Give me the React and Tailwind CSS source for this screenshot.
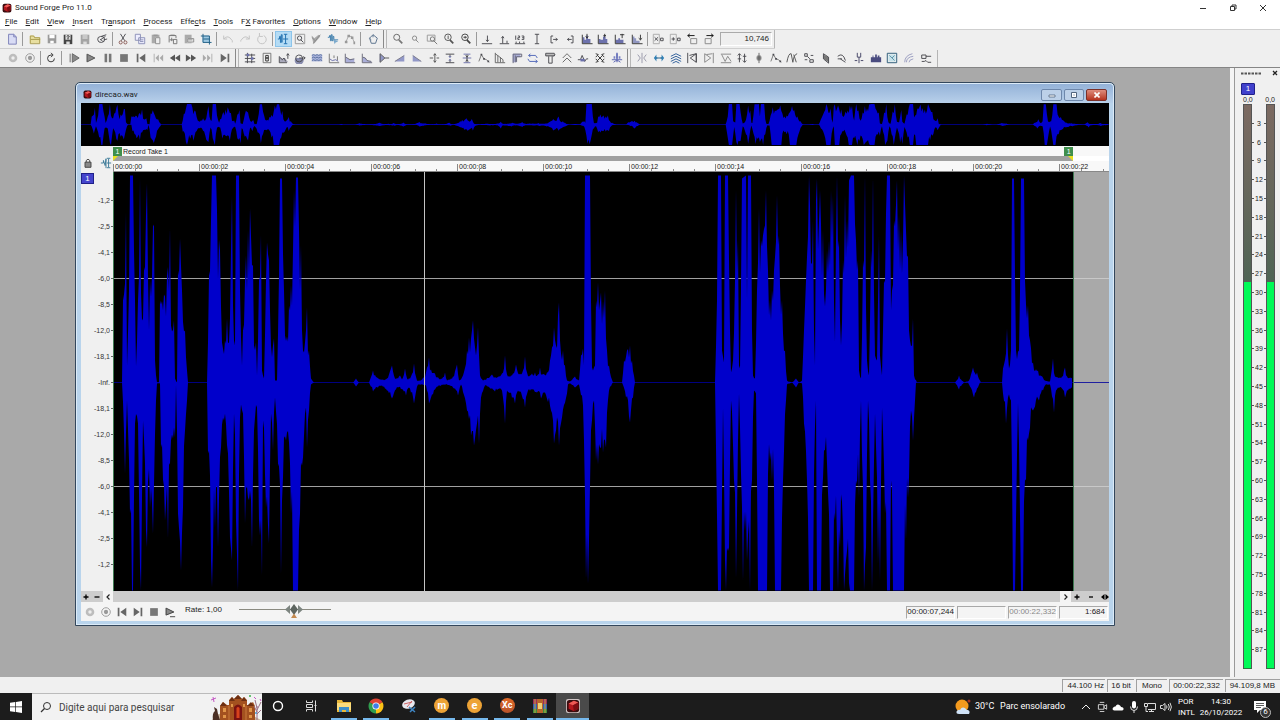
import React from "react";

/* ---------- audio envelope: [x, y] pairs inside a 996 x 419 lane, origin 113,172 ---------- */
const UPPER =
  "113,382 122,382 123,300 126,212 127,366 129,290 130,175 133,175 135,300 136,366 138,300 140,178 142,320 144,270 147,183 149,330 150,280 153,224 154,226 155,360 157,382 160,382 160,300 164,294 167,275 170,228 171,325 174,320 175,378 177,382 178,270 180,238 182,290 185,330 187,370 188,382 207,382 209,275 211,220 212,175 216,175 217,210 220,250 222,342 225,340 227,318 229,342 231,250 232,195 234,340 235,345 236,175 239,175 240,290 242,365 243,330 246,255 247,290 248,230 250,208 253,265 254,345 256,342 257,375 259,280 261,235 262,370 264,378 266,280 267,242 269,260 271,345 273,345 274,338 275,380 277,380 279,275 280,178 282,178 284,290 285,335 287,336 289,305 291,285 293,250 294,190 296,177 298,177 299,230 301,245 302,330 304,352 306,330 307,307 308,355 309,350 311,378 314,382 353,382 356,378 359,382 369,382 373,370 377,377 380,379 387,378 392,365 395,378 400,375 402,379 405,368 407,378 411,376 414,363 417,380 422,379 426,372 429,357 431,369 435,373 440,379 445,372 447,380 453,376 457,364 459,380 463,375 467,350 469,337 472,330 473,320 476,355 478,327 480,375 483,380 492,374 497,377 502,373 505,355 507,374 513,373 516,364 519,374 523,370 525,356 527,372 532,373 535,372 538,374 540,367 542,374 547,372 551,355 554,327 556,345 558,315 559,302 560,340 563,350 565,365 567,380 570,381 575,376 579,380 581,355 583,348 584,365 585,175 590,175 591,300 592,367 595,365 596,300 598,282 599,310 601,292 605,290 607,350 610,372 613,382 622,382 624,360 627,350 630,345 632,360 635,382 715,382 717,300 718,175 721,175 722,350 724,362 725,175 728,175 730,330 731,372 733,360 735,280 736,190 738,240 739,365 740,368 742,178 746,175 747,300 748,175 751,175 752,330 753,375 755,378 757,290 759,208 761,240 763,235 766,190 768,270 770,300 772,290 774,270 777,195 779,235 782,300 785,350 787,380 792,382 796,378 799,382 802,380 804,330 806,280 809,175 810,205 813,220 814,330 815,365 816,200 817,178 820,190 823,230 825,306 827,250 829,240 831,190 833,195 835,342 836,240 837,175 839,240 841,345 843,260 845,195 847,220 849,180 851,175 854,175 856,240 858,260 859,370 861,378 863,260 865,175 867,360 869,375 871,250 873,177 875,355 877,360 879,235 880,355 882,375 884,280 887,175 890,175 891,310 892,290 894,220 897,180 899,215 901,230 904,175 906,230 908,255 909,330 912,345 913,318 914,375 917,382 955,382 959,375 964,382 969,380 973,367 977,372 981,382 1002,382 1003,368 1007,328 1009,368 1011,350 1012,178 1014,178 1016,350 1019,350 1021,178 1024,178 1025,280 1028,305 1030,340 1033,362 1038,370 1045,380 1050,381 1053,358 1055,376 1062,376 1065,367 1067,376 1073,376";
const LOWER =
  "113,382 122,382 125,473 127,400 130,513 132,590 133,590 135,423 138,423 140,567 141,590 143,420 146,530 147,547 150,507 153,533 156,400 157,383 160,383 161,447 165,520 168,538 171,440 175,437 176,384 178,513 181,570 183,507 187,400 188,382 207,382 208,453 211,560 212,587 215,527 218,547 221,447 224,420 228,453 230,537 232,560 234,413 236,520 238,590 240,417 243,413 245,523 248,497 252,547 254,430 257,407 259,520 262,575 263,420 266,507 269,543 271,413 273,450 275,397 278,463 281,573 283,477 286,440 290,463 291,513 293,590 298,590 300,513 303,457 306,407 307,447 309,410 311,384 314,382 353,382 356,386 359,382 369,382 373,391 382,385 392,398 398,387 406,395 409,387 414,403 418,384 426,385 429,403 438,386 447,384 453,387 458,395 461,384 467,410 471,435 474,445 477,423 479,443 481,397 485,385 495,391 502,390 505,423 507,390 515,403 518,390 525,407 528,390 537,392 541,398 544,392 551,410 554,443 556,430 559,445 562,417 567,393 568,384 570,383 575,387 579,384 583,405 585,497 586,578 588,583 589,540 591,430 594,400 596,460 598,464 600,447 603,452 606,447 609,390 613,382 622,382 626,397 630,422 633,397 635,382 715,382 716,447 718,590 721,590 723,407 725,560 726,590 729,547 731,400 734,480 736,577 739,393 741,473 743,580 745,530 747,560 750,590 752,480 754,390 756,393 758,590 767,590 768,473 772,480 774,487 775,590 781,590 783,480 786,400 787,384 792,382 796,387 799,382 802,383 804,423 807,480 809,590 813,590 814,473 816,400 817,590 821,590 824,450 827,463 830,590 833,590 835,520 838,590 840,547 844,590 846,560 850,590 854,590 856,480 859,497 861,400 864,590 866,547 868,400 870,480 872,590 875,413 878,563 880,580 882,407 885,513 887,590 890,590 891,480 893,590 904,590 906,540 909,477 911,410 913,440 915,400 916,382 955,382 959,389 964,382 968,382 974,397 980,382 1002,382 1003,393 1006,423 1008,397 1011,400 1013,590 1015,590 1018,402 1021,590 1023,590 1026,480 1029,433 1033,410 1039,400 1043,390 1045,385 1050,384 1054,412 1056,390 1062,388 1065,397 1068,390 1073,388";

/* Resamples an envelope to one column per pixel; columns between two listed peaks vary a little. */
function columns(text, seed) {
  const pts = text.split(" ").map((p) => p.split(",").map(Number));
  const out = [];
  let k = 0;
  for (let x = 113; x < 1073; x++) {
    while (k < pts.length - 2 && pts[k + 1][0] <= x) k++;
    const [x0, y0] = pts[k];
    const [x1, y1] = pts[k + 1];
    const t = x1 === x0 ? 0 : (x - x0) / (x1 - x0);
    const amp = y0 + (y1 - y0) * t - 382;
    const noise = Math.abs(Math.sin((x + seed) * 127.1) * 43758.5) % 1;
    const flat = Math.abs(amp) > 200 || x === x0;
    out.push([x, 382.5 + amp * (flat ? 1 : 0.62 + 0.38 * noise)]);
  }
  return out;
}
const WAVE = columns(UPPER, 3)
  .concat(columns(LOWER, 11).reverse())
  .map(([x, y]) => x + "," + y.toFixed(1))
  .join(" ");

/* ---------- toolbar glyphs on a 14 x 14 grid: [kind, colour, path] ---------- */
const K = "#4a4a50";
const G = "#8d8d8d";
const L = "#c2c2c2";
const B = "#6c71ac";
const C = "#2f7fb5";
const GLYPHS = {
  new: [["f", "#d9dcf5", "M3 1h6l3 3v9H3z"], ["s", "#7d82b8", "M3 1.500h6l3 3v8.500H3zM9 1.500v3h3"]],
  open: [["f", "#e8dfa0", "M1 3h5l1 2h6v7H1z"], ["s", "#a89a4c", "M1.500 3.500h4l1 2h6v7h-11zM2 7.500h11"]],
  save: [["f", "#9a9a9a", "M2 2h10v10H2z"], ["f", "#fff", "M4 2h6v4H4zM5 9h4v3H5z"]],
  saveAs: [["f", "#444", "M2 2h10v11H2z"], ["f", "#ddd", "M4 2h6v6H4zM5 10h4v3H5z"], ["s", "#222", "M5.500 4q1.500-2 3 0l-1.500 1.500v2"]],
  saveAll: [["f", "#a5a5a5", "M2 2h10v11H2z"], ["f", "#c9c9c9", "M4 2h6v5H4z"], ["f", "#dedede", "M5 10h4v3H5z"]],
  render: [["s", K, "M2 8a4 3.500 0 1 0 8-1a4 3.500 0 1 0-8 1M6 4l6-2M5 8l6-4M5 7l3 3M9 8l4-1"]],
  cut: [["s", K, "M4 1l5 8M10 1L5 9"], ["s", "#8a5a55", "M2.500 11a1.800 1.800 0 1 0 3.600 0a1.800 1.800 0 1 0-3.600 0M8 11a1.800 1.800 0 1 0 3.600 0a1.800 1.800 0 1 0-3.600 0"]],
  copy: [["f", "#eef", "M1 1h7v7H1zM5 5h8v8H5z"], ["s", "#8a8fb5", "M1.500 1.500h6v7h-6zM5.500 5.500h7v7h-7zM7 8h4M7 10h4"]],
  paste: [["f", "#aaa", "M2 2h9v10H2z"], ["f", "#eee", "M6 5h6v8H6z"], ["s", G, "M4 2.500h5M6.500 5.500h5v7h-5z"]],
  pasteMix: [["s", "#777", "M2.500 11V3h8v3M4 2.500h5M7.500 7.500h4v5h-4zM3 8h5M5.500 5.500v4"]],
  pasteNew: [["f", "#aaa", "M2 2h8v10H2z"], ["f", "#eee", "M5 6h8v5H5z"], ["s", G, "M5.500 6.500h7v4h-7zM6 8h5"]],
  crop: [["f", "#9cc8e2", "M3 3h8v8H3z"], ["s", "#1e5f85", "M3.500 1v10h10M1 3.500h10v10M4 7h7"]],
  undo: [["s", L, "M2 7q5-6 10 2v2M2 3v4h4"]],
  redo: [["s", L, "M12 7Q7 1 2 9v1M12 3v4H8"]],
  repeat: [["s", L, "M4 3.500a5 5 0 1 0 5-.5M4 0v4h4"]],
  edit: [["s", "#1f6fae", "M1 7h2V4h1v7h1V2h1v9M8 1.500h4M10 1.500v11M8 12.500h4M7 7h6"]],
  zoomSel: [["s", "#999", "M1.500 1.500h11v11h-11z"], ["s", K, "M4 6a2.500 2.500 0 1 0 5 0a2.500 2.500 0 1 0-5 0M8 8l3 3"]],
  pencil: [["f", "#aaa", "M2 3l3 3 5-4 2 2-6 7-2 2z"], ["s", "#888", "M2 5l4 4M12 2l-8 10"]],
  event: [["s", "#3b7cab", "M1 5h2V3h1v6h1V2h1v7h1V4h1v4h5"], ["f", "#7aa9cc", "M7 7l6 3-3 1-1 2z"]],
  env: [["s", "#aaa", "M2 11l3-7h4l3 7"], ["f", "#999", "M1 9h3v3H1zM4 2h3v3H4zM8 4h3v3H8zM11 10h2v3h-2z"]],
  script: [["s", "#58718c", "M3 6l4-4 5 4-2 6H5zM7 2v3M3 6l2 2"]],
  zoom: [["s", "#666", "M2 5a3.500 3.500 0 1 0 7 0a3.500 3.500 0 1 0-7 0"], ["t", "#777", "M8 8l4 4"]],
  zoomSmall: [["s", "#888", "M4 6a2.500 2.500 0 1 0 5 0a2.500 2.500 0 1 0-5 0M8 8l3 3"]],
  zoomRect: [["s", "#9a9a9a", "M1.500 2.500h9v7h-9z"], ["s", "#777", "M5 7a2.500 2.500 0 1 0 5 0a2.500 2.500 0 1 0-5 0M9 9l4 4"]],
  zoomOne: [["s", "#555", "M2 5a3.800 3.800 0 1 0 7.600 0a3.800 3.800 0 1 0-7.600 0M6 3v4"], ["t", "#555", "M8 8l4 4"]],
  zoomAll: [["s", "#444", "M2 5a3.800 3.800 0 1 0 7.600 0a3.800 3.800 0 1 0-7.600 0M4 5h4M6 3.500v3"], ["t", "#444", "M8 8l4 4"]],
  toStart: [["s", K, "M1 12.500h12M7.500 3v7M6 8l1.500 2L9 8"]],
  toEnd: [["s", K, "M2 12.500h11M5.500 12V4M4 6l1.500-2L7 6M10.500 9v3"]],
  ruler: [["s", K, "M1 12.500h12M2.500 10v2M6.500 10v2M11.500 10v2M2 3v5M4.500 3.500h2v2h-2v2h2M9 3.500h2.500v4H9M9.500 5.500h2"]],
  ibeam: [["s", K, "M4.500 1.500h5M7 1.500v11M4.500 12.500h5"]],
  markIn: [["s", K, "M6 3.500H3.500v8H6M6 7.500h5M9 6l2 1.500L9 9"]],
  markOut: [["s", K, "M8 3.500h2.500v8H8M4 7.500h5M6 6L4 7.500 6 9"]],
  hist1: [["f", B, "M2 12V5h2v3h2V3h2v4h3v5z"], ["s", "#333", "M1.500 2v10.500h12M7 1v5M5.500 4L7 6l1.500-2"]],
  hist2: [["f", B, "M2 12V7h2v1h3V4h3v3h2v5z"], ["s", "#333", "M1.500 2v10.500h12M9 1v4M7.500 3h3"]],
  hist3: [["f", B, "M2 12V8h3V6h2v2h4v4z"], ["s", "#333", "M1.500 2v10.500h12M7 2h5M9.500 1v5"]],
  hist4: [["f", "#8f95bf", "M2 12V4h2v2h2v3h4v3z"], ["s", "#333", "M1.500 2v10.500h12M11 2v6M9 6l2 2 2-2"]],
  delX: [["s", "#aaa", "M1.500 1.500h7v11h-7z"], ["s", K, "M3 5l4 4M7 5L3 9M10 6h3v3h-3z"]],
  addX: [["s", "#aaa", "M1.500 1.500h7v11h-7z"], ["s", K, "M3 7h4M5 5v4M10 6h3v3h-3z"]],
  moveL: [["s", "#888", "M5.500 6.500h7v6h-7z"], ["s", "#111", "M2 3h8M4.500 1L2 3l2.500 2"]],
  moveR: [["s", "#888", "M2.500 6.500h7v6h-7z"], ["s", "#111", "M4 3h8M9.500 1L12 3 9.500 5"]],
  rec: [["f", "#bdbdbd", "M2 7a5 5 0 1 0 10 0a5 5 0 1 0-10 0"], ["f", "#eee", "M5 7a2 2 0 1 0 4 0a2 2 0 1 0-4 0"]],
  rec2: [["s", "#999", "M2 7a5 5 0 1 0 10 0a5 5 0 1 0-10 0"], ["f", "#999", "M4.500 7a2.500 2.500 0 1 0 5 0a2.500 2.500 0 1 0-5 0"]],
  loop: [["s", "#333", "M8.500 3.500H7a4 4 0 1 0 4 4M7 1L9.500 3.500 7 6"]],
  playAll: [["s", "#666", "M2.500 2v10"], ["f", "#888", "M5 2l8 5-8 5z"], ["s", "#666", "M5 2l8 5-8 5z"]],
  play: [["f", "#888", "M2 2l10 5-10 5z"], ["s", "#555", "M2.500 2.500l9 4.500-9 4.500z"]],
  pause: [["f", "#777", "M3 2h3v10H3zM8 2h3v10H8z"]],
  stop: [["f", "#777", "M2.500 2.500h9v9h-9z"]],
  prev: [["f", "#666", "M2 2h2v10H2zM12 2v10L5 7z"]],
  rewAll: [["f", "#aaa", "M2 2h1v10H2zM8 3v8L4 7zM13 3v8L9 7z"]],
  rew: [["f", "#555", "M7 3v8L1 7zM13 3v8L7 7z"]],
  fwd: [["f", "#555", "M1 3v8l6-4zM7 3v8l6-4z"]],
  fwdAll: [["f", "#aaa", "M1 3v8l4-4zM6 3v8l4-4zM11 2h1v10h-1z"]],
  next: [["f", "#666", "M2 2v10l7-5zM10 2h2v10h-2z"]],
  sliders: [["s", K, "M1 3.500h12M1 7.500h12M1 11.500h12M4 1v12M9 2v11"], ["f", B, "M3 2h3v3H3zM8 6h3v3H8z"]],
  eight: [["s", "#777", "M2.500 1.500h9v11h-9z"], ["s", "#333", "M5.500 4h3v3h-3zM5.500 7h3v3.500h-3z"]],
  chartUp: [["f", "#aab", "M2 12V6l4 2 2-1 4 5z"], ["s", K, "M1.500 5v7.500h9M2 6l3 3 2-2 2 4M11.500 2v6M10 4l1.500-2L13 4"]],
  knob: [["f", "#888cae", "M2 7a5 5 0 1 0 8 0z"], ["s", K, "M2 8a4 4 0 1 0 8-1a4 4 0 1 0-8 1M6 7h7M11 5l2 2-2 2"]],
  bands: [["f", "#a8b2da", "M1 3h12v8H1z"], ["s", "#5a719f", "M1 4l2-1 2 1 2-1 2 1 2-1 2 1M1 7l2-1 2 1 2-1 2 1 2-1 2 1M1 10l2-1 2 1 2-1 2 1 2-1 2 1"]],
  graphA: [["s", "#777", "M1.500 2v10.500H13M11 5v5M7 4v3"], ["s", B, "M2 8l3 2 4-1 3 2"]],
  graphB: [["f", "#aaaed8", "M2 12V6l5 3 5-1v4z"], ["s", "#667", "M1.500 2v10.500H13M2 6l5 3 5-1"]],
  graphC: [["f", "#aaaed8", "M2 12V6l3 1 2 3 5 1v1z"], ["s", "#667", "M1.500 2v10.500H13M2 6l3 1 2 3 5 1"]],
  fan: [["f", "#9298c8", "M2 2l6 5-6 5z"], ["s", "#555", "M2.500 2v10L8 7zM8 7h5"]],
  fadeIn: [["f", "#9298c8", "M1 11l11-7v7z"], ["s", "#778", "M1 11l11-7"]],
  fadeOut: [["f", "#9298c8", "M2 4l10 7H2z"], ["s", "#778", "M2 4l10 7"]],
  gate: [["s", "#555", "M8 2v10M6.500 4L8 2l1.500 2M6.500 10L8 12l1.500-2M2 7h4M10 7h3"]],
  comp: [["s", K, "M2 2.500h10M2 12.500h10M7 3v3M7 12V9"], ["f", B, "M5 5h4L7 7zM5 10h4L7 8z"]],
  comp2: [["s", B, "M3 2.500h8M3 12.500h8M2 7h10"], ["s", K, "M7 3v9M5.500 4L7 6l1.500-2M5.500 11L7 9l1.500 2"]],
  nodes: [["s", "#777", "M1 11l3-8 3 5 3 1 3 3"], ["f", K, "M3 2h2v2H3zM6 7h2v2H6zM11 10h2v2h-2z"]],
  bars: [["s", "#666", "M1.500 1v11.500H13M4.500 4v8M7.500 6v6M10.500 9v3M1.500 2l4 3 5 4"]],
  flag: [["f", "#aaaed8", "M2 2h9v4H7v6H2z"], ["s", "#667", "M2.500 13V2.500h10v3h-6v6M5 4v8"]],
  swap: [["s", "#4f66b8", "M2 4h8l2 3M4 2L2 4l2 2M12 11H3L1 8M10 9l2 2-2 2"]],
  tool: [["f", "#bbb", "M2 2h9v3H2z"], ["s", K, "M2 1.500h10v3H2zM5.500 5v8h4V5M11 5l2-2"]],
  peaks: [["s", "#666", "M2 7l5-5 5 5M2 12l5-5 5 5"]],
  sine: [["s", K, "M1 9h3l2-5 3 7 2-3h2"], ["f", B, "M4 8h5v3H4z"]],
  cross: [["s", "#333", "M2 2l3 1-3 3M2 12l3-1-3-3M12 2L9 3l3 3M12 12l-3-1 3-3M4 4l6 6M10 4l-6 6"]],
  flower: [["f", "#7a83c4", "M6 1h2v7H6zM3 5h2v3H3zM9 5h2v3H9z"], ["s", "#5a64b0", "M1 9h12M3 12q4-4 8 0M7 2v10"]],
  mirror: [["s", "#99a", "M7 1v12M2 3l3 4-3 4M12 3L9 7l3 4"]],
  stretch: [["f", C, "M1 7l3-4v3h1v2H4v3zM13 7l-3-4v3H9v2h1v3z"], ["s", "#215e87", "M4 7h6"]],
  layers: [["s", "#2f5f9a", "M1 5l6-3 6 3M1 8l6-3 6 3M1 11l6-3 6 3M3 13l4-2 4 2"]],
  skipL: [["s", K, "M2 1v12M12 2L5 7l7 5zM4 4l8-2M12 2v10"]],
  skipR: [["s", "#888", "M12 1v12M2 2l7 5-7 5zM4 3l7-1"]],
  sineBox: [["s", "#888", "M1 2.500h12M1 12.500h12M2 3l4 8 3-6 4 6"]],
  updown: [["s", K, "M4 2v10M10 2v10M2 4l2-2 2 2M8 10l2 2 2-2M2 8h4M8 5h4"]],
  split: [["f", "#888", "M5 4h4v6H5z"], ["s", "#666", "M7 1v12M4 6h6M4 8h6"]],
  curves: [["s", "#555", "M1 12Q3 1 6 2q1 5 2 10Q9 3 13 2M9 3l3 9"]],
  percent: [["s", K, "M2 2h3v3H2zM5 5l3 3M9 4h3M8 9h4v3H8zM2 9h3"]],
  leaf: [["f", "#777", "M4 3l6 3v6L4 8z"], ["s", K, "M4 2v6l6 5V6z"]],
  arc: [["s", K, "M2 5q6-5 9 5M5 8l6 4M2 8h5"]],
  fork: [["s", "#446", "M5 1v5h4V1M7 6v7M2 10h3M9 10h3"]],
  towers: [["f", "#4a4c80", "M1 12V6h2V4h1v2h2V3h2v3h1V4h2v2h2v6z"]],
  winBlue: [["s", "#2a5a78", "M1.500 1.500h11v11h-11z"], ["f", "#c5e2ea", "M3 3h8v8H3z"], ["s", "#5c93a8", "M4 4l6 6M10 4l-3 3"]],
  rainbow: [["s", "#9a9dc0", "M2 12q0-8 9-10M4 12q0-6 8-7M7 12q0-3 5-4"]],
  key: [["s", K, "M2 3.500h5v4H2zM7 5h6M2 11h3l2-1 2 2h4"]],
  lock: [["f", "#888", "M3.500 6h7v6h-7z"], ["s", "#444", "M3.500 6h7v6h-7zM5 6V4q2-3 4 0v2"]],
  arrowTool: [["s", "#3b7a98", "M1 7h3V4l2 6 1-8v11M8 7h5M10 2v10M8 1.500h4M8 12.500h4"]],
  playSel: [["f", "#888", "M2 2l10 5-10 4z"], ["s", "#444", "M7 12.500h6M2.500 2.500l9 4.500-9 3.500z"]],
};

function Glyph({ name }) {
  return (
    <svg viewBox="0 0 14 14" className="size-3 shrink-0" aria-hidden="true">
      {GLYPHS[name].map(([kind, color, d], i) =>
        kind === "f" ? (
          <path key={i} d={d} fill={color} />
        ) : (
          <path key={i} d={d} fill="none" stroke={color} strokeWidth={kind === "t" ? 2 : 1.1} />
        )
      )}
    </svg>
  );
}

function Tools({ names, className, active }) {
  return (
    <div className={"flex shrink-0 " + className}>
      {names.split(" ").map((n, i) => (
        <button
          key={i}
          aria-label={n}
          className={
            "flex h-4 min-w-0 flex-1 items-center justify-center " +
            (n === active ? "bg-[#b5dcf5] outline-1 -outline-offset-1 outline-[#8cc4ea]" : "")
          }
        >
          <Glyph name={n} />
        </button>
      ))}
    </div>
  );
}

const Sep = () => <div className="mx-[2px] h-[14px] w-px shrink-0 bg-[#9a9a9a]" />;
const BandEnd = () => (
  <div className="mx-[2px] flex h-[18px] shrink-0 gap-[2px]">
    <div className="w-px bg-[#8a8a8a]" />
    <div className="w-px bg-[#b8b8b8]" />
  </div>
);

function AppMark({ className }) {
  return (
    <svg viewBox="0 0 16 16" className={className} aria-hidden="true">
      <rect x="1" y="1" width="14" height="14" rx="3" fill="#3a0d0f" />
      <path d="M3 5l6-3 5 2v7l-5 3-6-3z" fill="#b3161d" />
      <path d="M3 5l6-3 5 2-6 3z" fill="#ee5a56" />
      <path d="M8 7l6-3v7l-5 3z" fill="#7d0c12" />
    </svg>
  );
}

const MENUS = [
  ["", "F", "ile"], ["", "E", "dit"], ["", "V", "iew"], ["", "I", "nsert"], ["Tr", "a", "nsport"], ["", "P", "rocess"],
  ["Effe", "c", "ts"], ["", "T", "ools"], ["F", "X", " Favorites"], ["", "O", "ptions"], ["", "W", "indow"], ["", "H", "elp"],
];

function Header() {
  return (
    <header className="bg-white text-[8px] text-[#222]">
      <div className="flex h-[15px] items-center">
        <AppMark className="ml-[2px] mr-[3px] size-[10px]" />
        <h1 className="flex-1">Sound Forge Pro 11.0</h1>
        <button aria-label="Minimize" className="flex w-[30px] justify-center">
          <svg viewBox="0 0 8 8" className="size-2"><path d="M1 4.500h6" stroke="#333" /></svg>
        </button>
        <button aria-label="Restore" className="flex w-[30px] justify-center">
          <svg viewBox="0 0 8 8" className="size-2"><path d="M1.500 2.500h4v4h-4zM3 2.500v-1.500h4v4H5.500" fill="none" stroke="#333" /></svg>
        </button>
        <button aria-label="Close" className="mr-[2px] flex w-[30px] justify-center">
          <svg viewBox="0 0 8 8" className="size-2"><path d="M1 1l6 6M7 1L1 7" stroke="#333" /></svg>
        </button>
      </div>
      <nav className="flex h-[14px] items-center gap-2 pl-[5px]">
        {MENUS.map(([a, b, c]) => (
          <button key={a + b + c} className="whitespace-pre">
            {a}<u>{b}</u>{c}
          </button>
        ))}
      </nav>
    </header>
  );
}

function Toolbars() {
  return (
    <div className="border-y border-t-[#cfcfcf] border-b-[#858585] bg-[#efefef] shadow-[0_1px_0_#9a9a9a]">
      <div className="flex h-[19px] w-max items-center border-b border-[#cfcfcf] pl-1">
        <Tools names="new" className="w-4" />
        <Sep />
        <Tools names="open save saveAs saveAll render" className="ml-[2px] w-[83px]" />
        <Sep />
        <Tools names="cut copy paste pasteMix pasteNew crop" className="w-[99px]" />
        <Sep />
        <Tools names="undo redo repeat" className="w-[51px]" />
        <Sep />
        <Tools names="edit zoomSel pencil event env" active="edit" className="w-[83px]" />
        <Sep />
        <Tools names="script" className="ml-[2px] w-4" />
        <BandEnd />
        <Tools names="zoom zoomSmall zoomRect zoomOne zoomAll" className="ml-px w-[84px]" />
        <Sep />
        <Tools names="toStart toEnd ruler ibeam markIn markOut hist1 hist2 hist3 hist4" className="w-[166px]" />
        <Sep />
        <Tools names="delX addX moveL moveR" className="w-[67px]" />
        <output className="ml-[3px] flex h-[14px] w-[52px] items-center justify-end border border-[#aaa] border-r-white border-b-white pr-[2px] font-['Liberation_Sans',sans-serif] text-[8px] text-[#222]">
          10,746
        </output>
        <div className="ml-[2px] h-[18px] w-px bg-[#b5b5b5]" />
      </div>
      <div className="flex h-[18px] w-max items-center pl-[5px]">
        <Tools names="rec rec2" className="w-[33px]" />
        <Sep />
        <Tools names="loop" className="w-4" />
        <Sep />
        <Tools names="playAll play pause stop prev rewAll rew fwd fwdAll next" className="ml-[2px] w-[167px]" />
        <BandEnd />
        <Tools
          names="sliders eight chartUp knob bands graphA graphB graphC fan fadeIn fadeOut gate comp comp2 nodes bars flag swap tool peaks sine cross flower"
          className="ml-px w-[383px]"
        />
        <BandEnd />
        <Tools
          names="mirror stretch layers skipL skipR sineBox updown split nodes curves percent leaf arc fork towers winBlue rainbow key"
          className="ml-px w-[300px]"
        />
        <div className="ml-[3px] h-[17px] w-px bg-[#b5b5b5]" />
      </div>
    </div>
  );
}

function Overview() {
  return (
    <div className="h-[43px] bg-black py-px">
      <svg viewBox="113 175 960 415" preserveAspectRatio="none" className="size-full" aria-label="Overview">
        <path d="M113 382.500H1073" stroke="#00007a" strokeWidth="1" vectorEffect="non-scaling-stroke" />
        <polygon points={WAVE} fill="#0000cb" />
      </svg>
    </div>
  );
}

const SECONDS = ["00", "02", "04", "06", "08", "10", "12", "14", "16", "18", "20", "22"];

function Ruler() {
  return (
    <div className="flex h-[26px]">
      <div className="flex w-8 shrink-0 items-end justify-between bg-[#f0f0f0] px-px pb-[3px]">
        <button aria-label="Lock"><Glyph name="lock" /></button>
        <button aria-label="Edit tool"><Glyph name="arrowTool" /></button>
      </div>
      <div className="min-w-0 flex-1 bg-white">
        <div className="flex h-[10px] items-center bg-[#f8f8f8] text-[7px] text-[#222]">
          <div className="flex w-[96.4%] items-center justify-between">
            <div className="flex items-center gap-px">
              <span className="flex h-[9px] w-[9px] items-center justify-center bg-[#3f8f4c] text-white">1</span>
              Record Take 1
            </div>
            <span className="flex h-[9px] w-[9px] items-center justify-center bg-[#3f8f4c] text-white">1</span>
          </div>
        </div>
        <div className="flex h-[5px] w-[96.4%] justify-between bg-[#a0a0a0]">
          <svg viewBox="0 0 5 5" className="size-[5px]"><path d="M0 0h5L0 5z" fill="#e8e020" /></svg>
          <svg viewBox="0 0 5 5" className="size-[5px]"><path d="M0 0h5v5z" fill="#e8e020" /></svg>
        </div>
        <div className="flex h-[11px] overflow-hidden border-b border-[#888] bg-[#f8f8f8]">
          {SECONDS.map((s) => (
            <div key={s} className="flex w-[8.635%] shrink-0 flex-col justify-end">
              <div className="flex h-[7px] flex-col border-l border-[#888]">
                <span className="h-[5px] pl-px text-[7px] leading-[5px] text-[#222]">00:00:{s}</span>
                <div className="grid h-[2px] grid-cols-4">
                  <i />
                  <i className="border-l border-[#888]" />
                  <i className="border-l border-[#888]" />
                  <i className="border-l border-[#888]" />
                </div>
              </div>
            </div>
          ))}
        </div>
      </div>
    </div>
  );
}

const DB = ["-1,2", "-2,5", "-4,1", "-6,0", "-8,5", "-12,0", "-18,1", "-Inf.", "-18,1", "-12,0", "-8,5", "-6,0", "-4,1", "-2,5", "-1,2"];

function Lane() {
  return (
    <div className="flex min-h-0 flex-1">
      <div className="relative flex w-8 shrink-0 flex-col bg-[#f0f0f0] pb-[14px] pt-[15px] text-[7px] text-[#333]">
        <span className="absolute left-0 top-px flex h-[11px] w-[13px] items-center justify-center border border-[#20208a] bg-[#4444cc] text-[8px] text-white">
          1
        </span>
        {DB.map((d, i) => (
          <div key={i} className="flex flex-1 items-center justify-end gap-px">
            {d}
            <i className="h-px w-[2px] bg-[#666]" />
          </div>
        ))}
      </div>
      <div className="min-h-0 min-w-0 flex-1 bg-[#a9a9a9]">
        <svg viewBox="113 172 996 419" preserveAspectRatio="none" className="block size-full" aria-label="Waveform">
          <rect x="113" y="172" width="960" height="419" fill="#000" />
          <path d="M113 278.500H1073M113 486.500H1073" stroke="#a0a0a0" />
          <path d="M1073 278.500H1109M1073 486.500H1109" stroke="#c8c8c8" />
          <path d="M113 382.500H1073" stroke="#000080" />
          <path d="M1073 382.500H1109" stroke="#2020a0" />
          <polygon points={WAVE} fill="#0000cb" />
          <path d="M424.500 172V591" stroke="#c4c4c4" />
          <path d="M113.500 172V591M1073.500 172V591" stroke="#3f7a52" />
        </svg>
      </div>
    </div>
  );
}

function ScrollRow() {
  return (
    <div className="flex h-[11px] shrink-0 items-center bg-[#cdcdcd] text-black">
      <button aria-label="Zoom in level" className="flex w-[9px] justify-center"><svg viewBox="0 0 6 6" className="size-[6px]"><path d="M.5 3h5M3 .5v5" stroke="#000" strokeWidth="1.300" /></svg></button>
      <button aria-label="Zoom out level" className="flex w-[13px] justify-center"><svg viewBox="0 0 6 6" className="size-[6px]"><path d="M.5 3h5" stroke="#000" strokeWidth="1.300" /></svg></button>
      <button aria-label="Scroll left" className="flex h-full w-[10px] items-center justify-center bg-[#f4f4f4]"><svg viewBox="0 0 6 6" className="size-[6px]"><path d="M4.500 0.500L2 3l2.500 2.500" fill="none" stroke="#222" strokeWidth="1.200" /></svg></button>
      <div className="flex-1" />
      <button aria-label="Scroll right" className="flex h-full w-[11px] items-center justify-center bg-[#f4f4f4]"><svg viewBox="0 0 6 6" className="size-[6px]"><path d="M1.500 0.500L4 3 1.500 5.500" fill="none" stroke="#222" strokeWidth="1.200" /></svg></button>
      <button aria-label="Zoom in time" className="flex w-[11px] justify-center"><svg viewBox="0 0 6 6" className="size-[6px]"><path d="M.5 3h5M3 .5v5" stroke="#000" strokeWidth="1.300" /></svg></button>
      <button aria-label="Zoom out time" className="flex w-[18px] justify-center"><svg viewBox="0 0 6 6" className="size-[6px]"><path d="M1 3h4" stroke="#000" strokeWidth="1.300" /></svg></button>
      <button aria-label="Fit" className="flex w-[9px] justify-center"><svg viewBox="0 0 8 6" className="h-[6px] w-2"><path d="M3.500 0v6L0 3zM4.500 0v6L8 3z" /></svg></button>
    </div>
  );
}

const FIELD = "flex h-[13px] items-center justify-end border border-[#a8a8a8] border-b-white border-r-white";

function PlayBar() {
  return (
    <div className="flex h-[19px] shrink-0 items-center bg-[#f4f4f4] text-[8px] text-[#222]">
      <Tools names="rec rec2 prev next stop playSel" className="ml-px w-24" />
      <label htmlFor="rate" className="-mt-1 ml-[7px] w-[54px]">Rate: 1,00</label>
      <div className="relative h-4 w-[92px]">
        <div className="mt-[5px] h-px bg-[#8a8a80]" />
        <svg viewBox="0 0 18 14" className="absolute left-[46px] top-0 h-[14px] w-[18px]" aria-hidden="true">
          <path d="M5 1v9L0 5.500zM13 1v9l5-4.500z" fill="#7d8580" />
          <path d="M9 0l4 5.500L9 11 5 5.500z" fill="#5d6560" />
          <path d="M9 9.500l3 4.500H6z" fill="#c48a50" />
        </svg>
        <input id="rate" type="range" defaultValue="60" className="absolute inset-0 w-full opacity-0" />
      </div>
      <div className="ml-auto flex gap-[2px] pr-px pt-px">
        <output className={FIELD + " w-[49px]"}>00:00:07,244</output>
        <output className={FIELD + " w-[49px]"} />
        <output className={FIELD + " w-[49px] text-[#888]"}>00:00:22,332</output>
        <output className={FIELD + " w-[49px] pr-[2px]"}>1:684</output>
      </div>
    </div>
  );
}

const CAPTION = "flex h-3 items-center justify-center rounded-[2px] border";

function DocWindow() {
  return (
    <section className="flex min-w-0 flex-1 flex-col rounded-t-[5px] border-[1px] border-[#33475c] bg-[#b9d4ec] px-[5px] pb-1 font-['Liberation_Sans',sans-serif] shadow-[inset_0_0_0_1px_#dcebf8]">
      <div className="-mx-1 mt-px flex h-[19px] items-center rounded-t-[4px] bg-gradient-to-b from-[#94b2d8] to-[#b8d0ea] px-1 pt-[2px] text-[8px] text-[#222]">
        <AppMark className="ml-[2px] mr-[3px] size-[9px]" />
        <h2 className="flex-1 font-[Roboto,'Open_Sans',sans-serif]">direcao.wav</h2>
        <div className="mr-[2px] flex gap-[2px]">
          <button aria-label="Minimize document" className={CAPTION + " w-[21px] border-[#6d87ab] bg-[#bcd0e8]"}>
            <svg viewBox="0 0 8 6" className="h-[6px] w-2"><path d="M1 3h6v2H1z" fill="#fff" stroke="#51647e" strokeWidth=".8" /></svg>
          </button>
          <button aria-label="Maximize document" className={CAPTION + " w-5 border-[#6d87ab] bg-[#bcd0e8]"}>
            <svg viewBox="0 0 8 6" className="h-[6px] w-2"><path d="M1.500.5h5v5h-5z" fill="#fff" stroke="#51647e" /><path d="M3.500 2.500h1v1h-1z" fill="#51647e" /></svg>
          </button>
          <button aria-label="Close document" className={CAPTION + " w-[21px] border-[#7a2f28] bg-gradient-to-b from-[#dd8b7c] to-[#b5301c]"}>
            <svg viewBox="0 0 6 6" className="size-[6px]"><path d="M.5.5l5 5M5.500.5l-5 5" stroke="#fff" strokeWidth="1.600" /></svg>
          </button>
        </div>
      </div>
      <Overview />
      <Ruler />
      <Lane />
      <ScrollRow />
      <PlayBar />
    </section>
  );
}

const MARKS = Array.from({ length: 29 }, (_, i) => (i + 1) * 3);

function Bar() {
  return (
    <div className="flex w-[9px] flex-col border border-[#555] border-b-[#2a7a40]">
      <div className="h-[31.5%] bg-gradient-to-b from-[#7c6a62] to-[#4f6455]" />
      <div className="flex-1 bg-[#00fa57]" />
    </div>
  );
}

function Meter() {
  return (
    <aside className="flex w-[50px] shrink-0 border-l-4 border-[#f4f4f4] bg-[#f0f0f0]">
      <div className="flex flex-1 flex-col border-l border-[#999] pb-2 pl-2 pr-[5px] font-['Liberation_Sans',sans-serif] text-[7px] text-[#222]">
        <div className="-ml-[2px] -mr-[5px] flex h-[10px] shrink-0 items-center justify-between">
          <svg viewBox="0 0 20 3" className="h-[3px] w-5" aria-hidden="true"><path d="M0 1.500h20" stroke="#555" strokeWidth="2" strokeDasharray="2.500 1" /></svg>
          <button aria-label="Close meters" className="pr-[2px]"><svg viewBox="0 0 6 6" className="size-[6px]"><path d="M1 1l4 4M5 1L1 5" stroke="#222" strokeWidth="1.300" /></svg></button>
        </div>
        <span className="-ml-[2px] mt-[5px] flex h-3 w-[14px] shrink-0 items-center justify-center rounded-[1px] border border-[#20208a] bg-[#4040cc] text-[8px] text-white">1</span>
        <div className="flex h-[9px] shrink-0 items-center justify-between"><span>0,0</span><span>0,0</span></div>
        <div className="flex flex-1 justify-between">
          <Bar />
          <div className="flex flex-1 flex-col py-[10px]">
            {MARKS.map((m) => (
              <div key={m} className="flex flex-1 items-center justify-between">
                <i className="h-px w-[2px] bg-[#555]" />
                {m}
                <i className="h-px w-[2px] bg-[#555]" />
              </div>
            ))}
          </div>
          <Bar />
        </div>
      </div>
    </aside>
  );
}

const STAT = "flex h-[13px] items-center border-l border-t border-[#a0a0a0] whitespace-nowrap";

function StatusBar() {
  return (
    <footer className="flex h-4 shrink-0 items-center justify-end gap-[2px] bg-[#f0f0f0] font-['Liberation_Sans',sans-serif] text-[8px] text-[#222]">
      <span className={STAT + " w-[43px] justify-end pr-px"}>44.100 Hz</span>
      <span className={STAT + " w-[27px] justify-center"}>16 bit</span>
      <span className={STAT + " w-[31px] justify-center"}>Mono</span>
      <span className={STAT + " w-[54px] justify-center"}>00:00:22,332</span>
      <span className={STAT + " w-[55px] justify-end pr-[5px]"}>94.109,8 MB</span>
    </footer>
  );
}

function SearchArt() {
  return (
    <svg viewBox="0 0 52 26" className="h-[26px] w-[52px] shrink-0" aria-hidden="true">
      <path d="M2 26l3-5 8-2 27 1 11 6z" fill="#c9b39c" />
      <path d="M10 26V12l3-4 4 3h2V6l3-3 2 2 4-4 4 4 2-2 3 3v5h2l4-3 2 4v14z" fill="#a3511f" />
      <path d="M10 12l3-4 4 4zM19 7l3-4 3 4zM24 5l4-4 4 4zM31 7l3-4 3 4zM37 12l4-4 3 4z" fill="#6d2f12" />
      <path d="M24 26V13q4-5 8 0v13z" fill="#7a1210" />
      <path d="M26.500 24V14q1.500-2 3 0v10z" fill="#d8421c" />
      <path d="M13 14h3v4h-3zM39 14h3v4h-3zM13 21h3v3h-3zM39 21h3v3h-3zM21 10h2v3h-2zM33 10h2v3h-2z" fill="#e09548" />
      <path d="M19 12v14M36 12v14" stroke="#c97a3c" />
      <path d="M3 26q-1-7 2-9l-1-4 3 2 1 5 2 6z" fill="#4a2f24" />
      <path d="M47 26V12M47 18l-3-6M47 16l4-8M47 14l-2-8M47 20l4-4" stroke="#9a6f84" fill="none" />
      <path d="M1 6l5-2M3 3l1 5M44 3l2 2M50 5l1 2" stroke="#c456c4" />
      <circle cx="40" cy="2" r="1" fill="#3db04a" />
      <circle cx="46" cy="19" r="1" fill="#4a9bd0" />
    </svg>
  );
}

function Round({ color, text }) {
  return (
    <span className={"flex size-[15px] items-center justify-center rounded-full font-bold text-white " + color}>{text}</span>
  );
}

const APPS = [
  { name: "Cortana", icon: <svg viewBox="0 0 12 12" className="size-3"><circle cx="6" cy="6" r="4.500" fill="none" stroke="#fff" strokeWidth="1.400" /></svg> },
  { name: "Task view", icon: <svg viewBox="0 0 14 14" className="size-[14px]"><path d="M2.500 1.500v2h6v-2M2.500 5.500h6v3h-6zM2.500 12.500v-2h6v2M11.500 1.500v11M10.500 6.500h2" fill="none" stroke="#ddd" /></svg> },
  { name: "Explorer", open: true, icon: <svg viewBox="0 0 16 16" className="size-4"><path d="M1 2h5l1 2h8v10H1z" fill="#e8b73a" /><path d="M1 5h14v7H1z" fill="#fbdc7c" /><path d="M3 14V9h10v5h-3v-2H6v2z" fill="#3d8fc9" /></svg> },
  { name: "Chrome", open: true, icon: <svg viewBox="0 0 16 16" className="size-4"><path d="M8 8L1.500 4.300A7.500 7.500 0 0 1 14.500 4.300z" fill="#df4334" /><path d="M8 8l6.500-3.700A7.500 7.500 0 0 1 8 15.500z" fill="#fbc116" /><path d="M8 8v7.500A7.500 7.500 0 0 1 1.500 4.300z" fill="#2f9e4f" /><circle cx="8" cy="8" r="3.600" fill="#fff" /><circle cx="8" cy="8" r="2.800" fill="#3f7ee8" /></svg> },
  { name: "Snip", icon: <svg viewBox="0 0 16 16" className="size-4"><ellipse cx="7.500" cy="6" rx="6.500" ry="4.500" fill="#e8e8ee" transform="rotate(-20 7.500 6)" /><path d="M3 6l8-2M6 9l5-6" stroke="#c44" strokeWidth=".8" /><path d="M8 9l6 5M14 9l-5 5" stroke="#3f86c4" strokeWidth="1.500" /></svg> },
  { name: "Media m", open: true, icon: <Round color="bg-[#eda336] text-[10px]" text="m" /> },
  { name: "Editor e", open: true, icon: <Round color="bg-[#eda336] text-[11px]" text="e" /> },
  { name: "XG", open: true, icon: <Round color="bg-gradient-to-b from-[#e06a28] to-[#b8532a] text-[9px]" text="Xc" /> },
  { name: "Archiver", open: true, icon: <svg viewBox="0 0 16 16" className="size-4"><path d="M1 1h14v5H1z" fill="#9c2f5a" /><path d="M1 6h14v5H1z" fill="#2f63b5" /><path d="M1 11h14v4H1z" fill="#3c8c3c" /><path d="M5 1h6v14H5z" fill="#b5652c" /><path d="M6 5h4v6H6z" fill="#f0cf70" /><path d="M3 1v14M13 1v14" stroke="#c9a53f" /></svg> },
  { name: "Sound Forge", open: true, current: true, icon: <AppMark className="size-[14px] rounded-[2px] bg-[#cfc4c4]" /> },
];

function Taskbar() {
  return (
    <div className="flex h-[27px] shrink-0 bg-[#1c1c1c] text-[9px] text-white">
      <button aria-label="Start" className="flex w-8 items-center justify-center">
        <svg viewBox="0 0 12 12" className="size-3"><path d="M0 1.700L5.300 1v4.600H0zM6 .9L12 0v5.600H6zM0 6.300h5.300V11L0 10.300zM6 6.300h6V12l-6-.9z" fill="#fff" /></svg>
      </button>
      <label className="flex w-[230px] items-center border-t border-[#bbb] bg-[#f2f2f2] pl-2">
        <svg viewBox="0 0 12 12" className="size-3 shrink-0" aria-hidden="true"><circle cx="7" cy="5" r="3.500" fill="none" stroke="#333" /><path d="M4.500 7.500L1 11" stroke="#333" strokeWidth="1.200" /></svg>
        <input aria-label="Pesquisar" placeholder="Digite aqui para pesquisar" className="min-w-0 flex-1 bg-transparent pl-[7px] text-[10px] text-[#333] outline-none placeholder:text-[#444]" />
        <SearchArt />
      </label>
      <div className="flex w-[327px] shrink-0">
        {APPS.map((a) => (
          <button
            key={a.name}
            aria-label={a.name}
            className={"flex flex-1 flex-col items-center " + (a.current ? "bg-[#4a4a4a]" : "")}
          >
            <span className="flex flex-1 items-center">{a.icon}</span>
            <i className={"h-[2px] " + (a.open ? "bg-[#76b9ed] " : "") + (a.current ? "w-full" : "w-[26px]")} />
          </button>
        ))}
      </div>
      <div className="ml-auto flex items-center">
        <svg viewBox="0 0 18 18" className="size-[18px]" aria-hidden="true">
          <circle cx="8" cy="8" r="6.500" fill="#f39a1e" />
          <circle cx="15" cy="3" r="1.500" fill="#a83020" />
          <path d="M5 16q-3 0-2.500-2.500Q4 11 6 12q2-4 5.500-1.500Q12 12 14 12q2.500 1 1 4z" fill="#cfe2f7" />
        </svg>
        <span className="ml-[3px] w-[25px]">30°C</span>
        <span className="w-[78px] whitespace-nowrap">Parc ensolarado</span>
        <button aria-label="Show hidden icons" className="flex w-4 justify-center"><svg viewBox="0 0 10 10" className="size-[10px]"><path d="M1 7l4-4 4 4" fill="none" stroke="#eee" /></svg></button>
        <button aria-label="Meet now" className="flex w-4 justify-center"><svg viewBox="0 0 12 12" className="size-[11px]"><path d="M1.500 4h6v5h-6zM7.500 6l3-2v5l-3-2M3 1.500h5M3 11.500h5" fill="none" stroke="#ddd" /></svg></button>
        <button aria-label="OneDrive" className="flex w-4 justify-center"><svg viewBox="0 0 12 12" className="size-3"><path d="M2.500 9.500Q0 9 .8 7 2 5 3.500 5.500 5 2 8 4.500q.8.500 1 1.500Q12 6 11.500 8.500q-.5 1-1.500 1z" fill="#fff" /></svg></button>
        <button aria-label="Microphone" className="flex w-4 justify-center"><svg viewBox="0 0 12 12" className="size-3"><rect x="4" y="0" width="4" height="7.500" rx="2" fill="#fff" /><path d="M2.500 5.500q0 4 3.500 4t3.500-4M6 9.500V12" fill="none" stroke="#ddd" /></svg></button>
        <button aria-label="Network" className="flex w-4 justify-center"><svg viewBox="0 0 12 12" className="size-3"><path d="M4 2.500h7.500v6H4M5 10.500h5M7.500 8.500v2M.5 2.500h3v3h-3zM2 5.500v5h2" fill="none" stroke="#ddd" /></svg></button>
        <button aria-label="Volume" className="flex w-4 justify-center"><svg viewBox="0 0 12 12" className="size-3"><path d="M.5 4.500h2l2.500-2v7l-2.500-2h-2zM6.500 4.500q1 1.500 0 3M8.300 3q2 3 0 6M10 1.800q2.800 4.200 0 8.400" fill="none" stroke="#ddd" /></svg></button>
        <div className="w-6 pl-1 text-[8px] leading-[11px]">POR<br />INTL</div>
        <div className="w-[46px] text-center text-[8px] leading-[11px]">14:30<br />26/10/2022</div>
        <button aria-label="Notifications" className="relative ml-[5px] mr-[9px] flex h-[22px] w-[22px] items-center justify-center">
          <svg viewBox="0 0 12 12" className="size-3"><path d="M0 0h12v9H6l-3 3V9H0z" fill="#fff" /><path d="M2 2.500h8M2 4.500h8M2 6.500h5" stroke="#333" strokeWidth=".8" /></svg>
          <span className="absolute bottom-0 right-0 flex size-[11px] items-center justify-center rounded-full border border-[#bbb] bg-[#333] text-[8px]">6</span>
        </button>
      </div>
    </div>
  );
}

export default function App() {
  return (
    <div className="flex h-screen min-h-[480px] flex-col overflow-hidden bg-[#f0f0f0] font-[Roboto,'Open_Sans',sans-serif] leading-none">
      <Header />
      <Toolbars />
      <main className="flex min-h-0 flex-1">
        <div className="flex min-w-0 flex-1 bg-[#a9a9a9] pb-[51px] pl-[75px] pr-[115px] pt-[14px]">
          <DocWindow />
        </div>
        <Meter />
      </main>
      <StatusBar />
      <Taskbar />
    </div>
  );
}
